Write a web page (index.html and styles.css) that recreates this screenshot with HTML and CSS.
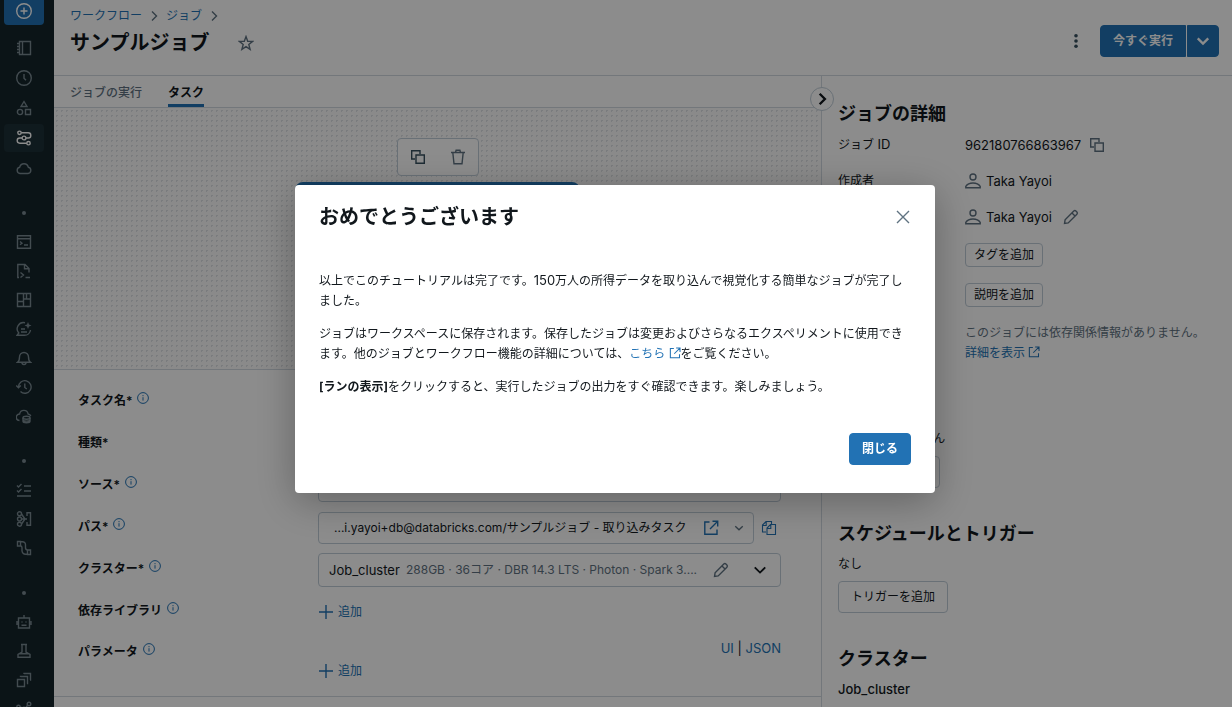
FILE: index.html
```html
<!DOCTYPE html>
<html lang="ja">
<head>
  <meta charset="UTF-8" />
  <meta name="viewport" content="width=device-width, initial-scale=1.0" />
  <title>サンプルジョブ</title>
  <link rel="stylesheet" href="styles.css">
</head>
<body>
  <!-- 共通アイコン -->
  <svg class="icon-defs" aria-hidden="true">
    <symbol id="i-info" viewBox="0 0 12 12"><circle cx="6" cy="6" r="5.4"/><path d="M6 5.2v3.4M6 3.1v1.1"/></symbol>
    <symbol id="i-user" viewBox="0 0 16 16"><circle cx="8" cy="4" r="3"/><path d="M.8 14.8v-1.5C2.3 11 5 10 8 10s5.700 1 7.200 3.300v1.500z"/></symbol>
    <symbol id="i-link" viewBox="0 0 16 16"><path d="M6.500 2H1.800v12.200H14V9.500M9.500 1.300h5.200v5.200M14.500 1.500L7 9"/></symbol>
    <symbol id="i-plus" viewBox="0 0 16 16"><path d="M8 1v14M1 8h14"/></symbol>
    <symbol id="i-pencil" viewBox="0 0 16 16"><path d="M1.500 14.500l.6-3.700 8.700-8.700a1.500 1.500 0 0 1 2.100 0l1 1a1.500 1.500 0 0 1 0 2.100L5.200 13.900zM9 4l3 3"/></symbol>
    <symbol id="i-copy" viewBox="0 0 16 16"><path d="M5 10H1.700V1.700H10V5M6 6h8.300v8.300H6z"/></symbol>
    <symbol id="i-down" viewBox="0 0 12 12"><path d="M1.500 3.800L6 8.200l4.500-4.400"/></symbol>
    <symbol id="i-right" viewBox="0 0 12 12"><path d="M4 1.500L8.500 6 4 10.500"/></symbol>
  </svg>

  <div class="app">
    <!-- サイドバー -->
    <nav class="sidebar" aria-label="メニュー">
      <button class="new-btn" aria-label="新規"><svg class="icon" viewBox="0 0 16 16"><circle cx="8" cy="8" r="7.300"/><path d="M8 4.500v7M4.500 8h7"/></svg></button>
      <div class="nav-group nav-main">
        <a href="#" class="nav-item" aria-label="ワークスペース"><svg class="icon" viewBox="0 0 16 16"><path d="M3.500 1.500h11v13h-11zM6.500 1.500v13M1 3.500h2.500M1 6.500h2.500M1 9.500h2.500M1 12.500h2.500"/></svg></a>
        <a href="#" class="nav-item" aria-label="最近"><svg class="icon" viewBox="0 0 16 16"><circle cx="8" cy="8" r="7.300"/><path d="M8 4v4.200l2 2"/></svg></a>
        <a href="#" class="nav-item" aria-label="カタログ"><svg class="icon" viewBox="0 0 16 16"><path d="M8 1.500l3 5H5zM9.500 9.500h5v5h-5z"/><circle cx="4" cy="12" r="2.600"/></svg></a>
        <a href="#" class="nav-item active" aria-label="ワークフロー"><svg class="icon" viewBox="0 0 16 16"><circle cx="3.500" cy="2.800" r="1.700"/><circle cx="8" cy="8" r="1.900"/><circle cx="12.500" cy="13.200" r="1.700"/><path d="M5.200 2.800h7A2.600 2.600 0 0 1 12.200 8H10M6 8H3.800a2.600 2.600 0 0 0 0 5.200h7"/></svg></a>
        <a href="#" class="nav-item" aria-label="クラスター"><svg class="icon" viewBox="0 0 16 16"><path d="M4 13.500a3.200 3.200 0 0 1-.3-6.300 4.400 4.400 0 0 1 8.600 0 3.200 3.200 0 0 1-.3 6.300z"/></svg></a>
      </div>
      <span class="nav-dot"></span>
      <div class="nav-group">
        <a href="#" class="nav-item" aria-label="SQLエディタ"><svg class="icon" viewBox="0 0 16 16"><path d="M1.500 1.800h13v12.500h-13zM1.500 4.700h13M4 7.500l2 1.700-2 1.600M8 11h4"/></svg></a>
        <a href="#" class="nav-item" aria-label="クエリ"><svg class="icon" viewBox="0 0 16 16"><path d="M3 14.500H1.800v-13H9l4 4v4M8.500 1.500v4.300H13M4.500 9.500l3 2.500-3 2.500M9.500 14.500H14"/></svg></a>
        <a href="#" class="nav-item" aria-label="ダッシュボード"><svg class="icon" viewBox="0 0 16 16"><path d="M1.500 1.500h13v13h-13zM7.500 1.500v13M1.500 9.500h6M7.500 7h7M10.500 1.500V7"/></svg></a>
        <a href="#" class="nav-item" aria-label="Genie"><svg class="icon" viewBox="0 0 16 16"><path d="M9 1.700A6.300 6.300 0 0 0 2.800 12L1 14.300h7.500a6 6 0 0 0 6-5.300M5 8h4M5 11h6"/><path class="solid" d="M12 1l1 2.500L15.500 4.500 13 5.500 12 8l-1-2.500L8.500 4.500 11 3.500z"/></svg></a>
        <a href="#" class="nav-item" aria-label="アラート"><svg class="icon" viewBox="0 0 16 16"><path d="M1.500 12.300c1.500-1 2-2.300 2-5.300a4.500 4.500 0 0 1 9 0c0 3 .5 4.300 2 5.300zM6 12.500a2 2 0 0 0 4 0"/></svg></a>
        <a href="#" class="nav-item" aria-label="クエリ履歴"><svg class="icon" viewBox="0 0 16 16"><path d="M2.500 8a6.300 6.300 0 1 1 2 4.600M.3 6.500l2.200 2.200 2.300-2.200M8.800 4.500v4l2 1.500"/></svg></a>
        <a href="#" class="nav-item" aria-label="SQLウェアハウス"><svg class="icon" viewBox="0 0 16 16"><path d="M3.500 12.500A3.100 3.100 0 0 1 3.600 6a4.300 4.300 0 0 1 8.500 0c1.500.3 2.400 1 2.700 2.200"/><ellipse cx="10.500" cy="9.800" rx="3.500" ry="1.500"/><path d="M7 9.800v3.500c0 2 7 2 7 0V9.800M7 11.700c0 1.900 7 1.900 7 0"/></svg></a>
      </div>
      <span class="nav-dot"></span>
      <div class="nav-group">
        <a href="#" class="nav-item" aria-label="ジョブの実行"><svg class="icon" viewBox="0 0 16 16"><path d="M1 3.500L2.500 5l3-3M1 8.500L2.500 10l3-3M8 4h7M8 9h7M1 14h14"/></svg></a>
        <a href="#" class="nav-item" aria-label="データ取り込み"><svg class="icon" viewBox="0 0 16 16"><circle cx="3.500" cy="2.800" r="2"/><circle cx="3.500" cy="8" r="2"/><circle cx="3.500" cy="13.200" r="2"/><path d="M5.500 3L9 8l-3.500 5M5.500 8H11M11 5V1.700h3.500v12.600H11V11"/></svg></a>
        <a href="#" class="nav-item" aria-label="Delta Live Tables"><svg class="icon" viewBox="0 0 16 16"><path d="M1.500 1.500h3v4.500h-3zM11.500 10h3v4.500h-3zM4.500 1.700h2a3 3 0 0 1 3 3v3a2.300 2.300 0 0 0 2 2.300M4.500 6c1 0 1.500.6 1.500 1.700v3.100a3.500 3.500 0 0 0 3.500 3.500h2"/></svg></a>
      </div>
      <span class="nav-dot"></span>
      <div class="nav-group">
        <a href="#" class="nav-item" aria-label="プレイグラウンド"><svg class="icon" viewBox="0 0 16 16"><path d="M2.500 4h11v10h-11zM8 1v3M1 7v4M15 7v4M5.500 8h1M9.500 8h1M5.500 11.300h5"/></svg></a>
        <a href="#" class="nav-item" aria-label="エクスペリメント"><svg class="icon" viewBox="0 0 16 16"><path d="M5 1.500h6M6 1.500V9L2 11.500v2.700h12v-2.700L10 9V1.500M3.500 10.800h9"/></svg></a>
        <a href="#" class="nav-item" aria-label="特徴量"><svg class="icon" viewBox="0 0 16 16"><path d="M1.500 7.500h7v7h-7zM4.500 5V4.500h7v7h-.6M8 2v-.5h6.500V8H14"/></svg></a>
        <a href="#" class="nav-item" aria-label="モデル"><svg class="icon" viewBox="0 0 16 16"><circle cx="2.500" cy="6" r="1.700"/><circle cx="13" cy="3" r="1.800"/><circle cx="8" cy="8" r="1.800"/><path d="M4.200 6l2.200 1M9.500 7l2-2.500M8 10v4"/></svg></a>
      </div>
    </nav>

    <div class="main">
      <!-- ヘッダー -->
      <header class="page-header">
        <div>
          <div class="breadcrumb">
            <a href="#">ワークフロー</a>
            <svg class="crumb-icon"><use href="#i-right"/></svg>
            <a href="#">ジョブ</a>
            <svg class="crumb-icon"><use href="#i-right"/></svg>
          </div>
          <div class="title-row">
            <h1>サンプルジョブ</h1>
            <button class="icon-btn" aria-label="お気に入り"><svg class="icon" viewBox="0 0 16 16"><path d="M8 1.600l1.700 4.600 4.900.2-3.800 3.100 1.300 4.800L8 11.600l-4.100 2.700 1.300-4.800-3.800-3.100 4.900-.2z"/></svg></button>
          </div>
        </div>
        <div class="header-actions">
          <button class="icon-btn dark" aria-label="その他"><svg class="icon" viewBox="0 0 16 16"><g class="solid"><circle cx="8" cy="2.700" r="1.800"/><circle cx="8" cy="8" r="1.800"/><circle cx="8" cy="13.300" r="1.800"/></g></svg></button>
          <div class="split-btn">
            <button class="btn-primary">今すぐ実行</button>
            <button class="btn-primary split-arrow" aria-label="実行オプション"><svg class="down-icon bold"><use href="#i-down"/></svg></button>
          </div>
        </div>
      </header>

      <div class="content">
        <section class="job-pane">
          <div class="tabs">
            <a href="#" class="tab">ジョブの実行</a>
            <a href="#" class="tab selected">タスク</a>
          </div>

          <!-- タスクグラフ -->
          <div class="canvas">
            <div class="node-tools">
              <button class="icon-btn dark" aria-label="複製"><svg class="icon"><use href="#i-copy"/></svg></button>
              <button class="icon-btn" aria-label="削除"><svg class="icon" viewBox="0 0 16 16"><path d="M1 3.500h14M5.500 3.500l.6-2.200h3.800l.6 2.200M2.800 3.500l1.200 11.200h8l1.200-11.200"/></svg></button>
            </div>
            <div class="task-node"></div>
          </div>

          <!-- タスク設定 -->
          <div class="task-form">
            <div class="form-row">
              <label class="form-label" for="taskName">タスク名* <svg class="info-icon"><use href="#i-info"/></svg></label>
              <input id="taskName" class="field" type="text">
            </div>
            <div class="form-row">
              <label class="form-label" for="taskType">種類*</label>
              <select id="taskType" class="field"><option></option></select>
            </div>
            <div class="form-row">
              <label class="form-label" for="taskSource">ソース* <svg class="info-icon"><use href="#i-info"/></svg></label>
              <select id="taskSource" class="field"><option></option></select>
            </div>
            <div class="form-row">
              <label class="form-label" for="taskPath">パス* <svg class="info-icon"><use href="#i-info"/></svg></label>
              <div class="field-line">
                <div class="field path-field">
                  <select id="taskPath" class="bare-select"><option>...i.yayoi+db@databricks.com/サンプルジョブ - 取り込みタスク</option></select>
                  <a href="#" class="icon-link" aria-label="ノートブックを開く"><svg class="icon"><use href="#i-link"/></svg></a>
                  <svg class="down-icon small"><use href="#i-down"/></svg>
                </div>
                <button class="icon-btn blue" aria-label="パスをコピー"><svg class="icon thin" viewBox="0 0 16 16"><path d="M5 12H1.500V5L5 1.500h5.500V4M1.500 5.500H5.200V1.500M6 14.500V8l3.500-3.500h5v10zM6 8.500h3.800v-4"/></svg></button>
              </div>
            </div>
            <div class="form-row">
              <label class="form-label" for="taskCluster">クラスター* <svg class="info-icon"><use href="#i-info"/></svg></label>
              <div class="field cluster-field">
                <select id="taskCluster" class="bare-select latin"><option>Job_cluster</option></select>
                <span class="cluster-spec">288GB · 36コア · DBR 14.3 LTS · Photon · Spark 3....</span>
                <button class="icon-btn" aria-label="クラスターを編集"><svg class="icon"><use href="#i-pencil"/></svg></button>
                <svg class="down-icon"><use href="#i-down"/></svg>
              </div>
            </div>
            <div class="form-row">
              <span class="form-label">依存ライブラリ <svg class="info-icon"><use href="#i-info"/></svg></span>
              <button class="add-btn"><svg class="icon"><use href="#i-plus"/></svg>追加</button>
            </div>
            <div class="form-row param-row">
              <span class="form-label">パラメータ <svg class="info-icon"><use href="#i-info"/></svg></span>
              <div class="param-value">
                <div class="mode-links latin"><a href="#">UI</a> | <a href="#">JSON</a></div>
                <button class="add-btn"><svg class="icon"><use href="#i-plus"/></svg>追加</button>
              </div>
            </div>
          </div>
        </section>

        <!-- ジョブの詳細 -->
        <aside class="details">
          <button class="collapse-btn" aria-label="詳細を閉じる"><svg class="down-icon bold"><use href="#i-right"/></svg></button>
          <section class="detail-section">
            <h2>ジョブの詳細</h2>
            <dl class="detail-list">
              <dt>ジョブ <span class="latin">ID</span></dt>
              <dd><span class="latin">962180766863967</span><button class="icon-btn" aria-label="IDをコピー"><svg class="icon"><use href="#i-copy"/></svg></button></dd>
              <dt>作成者</dt>
              <dd class="person"><svg class="icon"><use href="#i-user"/></svg><span class="latin">Taka Yayoi</span></dd>
              <dt>実行者</dt>
              <dd class="person"><svg class="icon"><use href="#i-user"/></svg><span class="latin">Taka Yayoi</span><button class="icon-btn edit-btn" aria-label="実行者を編集"><svg class="icon"><use href="#i-pencil"/></svg></button></dd>
              <dt>タグ</dt>
              <dd><button class="btn btn-small">タグを追加</button></dd>
              <dt>説明</dt>
              <dd><button class="btn btn-small">説明を追加</button></dd>
              <dt>リネージ</dt>
              <dd class="lineage">このジョブには依存関係情報がありません。<a href="#">詳細を表示 <svg class="ext-icon"><use href="#i-link"/></svg></a></dd>
            </dl>
          </section>
          <section class="detail-section">
            <h2>Git</h2>
            <p>設定されていません</p>
            <button class="btn">Git設定を追加</button>
          </section>
          <section class="detail-section">
            <h2>スケジュールとトリガー</h2>
            <p>なし</p>
            <button class="btn">トリガーを追加</button>
          </section>
          <section class="detail-section">
            <h2>クラスター</h2>
            <p class="cluster-name latin">Job_cluster</p>
          </section>
        </aside>
      </div>
    </div>
  </div>

  <!-- 完了モーダル -->
  <div class="overlay">
    <div class="modal" role="dialog" aria-modal="true" aria-labelledby="modalTitle">
      <div class="modal-header">
        <h2 id="modalTitle">おめでとうございます</h2>
        <button class="icon-btn" aria-label="閉じる"><svg class="icon" viewBox="0 0 16 16"><path d="M2 2l12 12M14 2L2 14"/></svg></button>
      </div>
      <div class="modal-body">
        <p>以上でこのチュートリアルは完了です。<span class="latin">150</span>万人の所得データを取り込んで視覚化する簡単なジョブが完了しました。</p>
        <p>ジョブはワークスペースに保存されます。保存したジョブは変更およびさらなるエクスペリメントに使用できます。他のジョブとワークフロー機能の詳細については、<a href="#">こちら <svg class="ext-icon"><use href="#i-link"/></svg></a>をご覧ください。</p>
        <p><strong>[ランの表示]</strong>をクリックすると、実行したジョブの出力をすぐ確認できます。楽しみましょう。</p>
      </div>
      <div class="modal-footer">
        <button class="btn-primary">閉じる</button>
      </div>
    </div>
  </div>
</body>
</html>
```
FILE: styles.css
```css
/* ===== 基本 ===== */
* {
  box-sizing: border-box;
}
body {
  margin: 0;
  font-family: Inter, "Noto Sans CJK JP", sans-serif;
  font-size: 12px;
  line-height: 20px;
  color: #11171c;
  background-color: #fff;
}
h1, h2, p, dl, dd {
  margin: 0;
}
h1, h2 {
  font-weight: 600;
}
h1 {
  font-size: 20px;
  line-height: 28px;
}
h2 {
  font-size: 18px;
  line-height: 24px;
}
a {
  color: #2272b4;
  text-decoration: none;
}
button, input, select {
  font: inherit;
  color: inherit;
}
button {
  cursor: pointer;
}
/* 英数字は和文より一回り大きくする */
.latin {
  font-size: 13px;
}

/* ===== アイコン ===== */
.icon-defs {
  display: none;
}
svg {
  fill: none;
  stroke: currentColor;
  stroke-width: 1.4;
  flex: none;
}
.solid {
  fill: currentColor;
  stroke: none;
}
.icon {
  width: 16px;
  height: 16px;
}
.icon.thin {
  stroke-width: 1.1;
}
.info-icon {
  width: 12px;
  height: 12px;
  margin-bottom: 6px;
  color: #2272b4;
  stroke-width: 1;
}
.crumb-icon, .ext-icon {
  width: 12px;
  height: 12px;
}
.down-icon {
  width: 14px;
  height: 14px;
  stroke-width: 1.6;
}
.down-icon.bold {
  stroke-width: 2;
}
.down-icon.small {
  width: 10px;
  height: 10px;
  color: #5f7281;
}
.icon-btn {
  display: flex;
  padding: 0;
  border: 0;
  background: none;
  color: #5f7281;
}
.icon-btn.dark {
  color: #37505f;
}
.icon-btn.blue, .icon-link {
  display: flex;
  color: #2272b4;
}

/* ===== ボタン ===== */
.btn, .btn-primary {
  height: 32px;
  padding: 0 12px;
  border: 1px solid #c0cdd8;
  border-radius: 4px;
  background: none;
}
.btn-small {
  height: 24px;
  padding: 0 8px;
}
.btn-primary {
  border-color: #2272b4;
  background-color: #2272b4;
  color: #fff;
  font-weight: 600;
}

/* ===== レイアウト ===== */
.app {
  display: flex;
  height: 100vh;
  overflow: hidden;
}
.main {
  flex: 1;
  display: flex;
  flex-direction: column;
  min-width: 0;
}
.content {
  flex: 1;
  display: flex;
  min-height: 0;
}

/* ===== サイドバー ===== */
.sidebar {
  width: 54px;
  padding: 0 10px 0 4px;
  background-color: #14252b;
  color: #7a8a92;
}
.new-btn {
  display: flex;
  justify-content: center;
  width: 100%;
  height: 25px;
  padding: 3px 0 0;
  border: 0;
  border-radius: 0 0 4px 4px;
  background-color: #2272b4;
  color: #fff;
}
.nav-item {
  display: flex;
  align-items: center;
  justify-content: center;
  height: 29px;
  border-radius: 4px;
  color: inherit;
}
.nav-main {
  display: grid;
  gap: 2px;
  margin-top: 9px;
}
.nav-main .nav-item {
  height: 28px;
}
.nav-item.active {
  background-color: #1d3038;
  color: #fff;
}
.nav-dot {
  display: block;
  width: 4px;
  height: 4px;
  margin: 29px auto 12px;
  border-radius: 50%;
  background-color: #7a8a92;
}

/* ===== ヘッダー ===== */
.page-header {
  display: flex;
  justify-content: space-between;
  height: 76px;
  padding: 6px 13px 0 16px;
  border-bottom: 1px solid #d1d9e1;
}
.breadcrumb, .title-row, .header-actions {
  display: flex;
  align-items: center;
}
.breadcrumb {
  gap: 6px;
  color: #5f7281;
}
.title-row {
  gap: 29px;
  padding-top: 3px;
}
.header-actions {
  gap: 16px;
}
.split-btn {
  display: flex;
  gap: 1px;
}
.split-btn .btn-primary:first-child {
  border-radius: 4px 0 0 4px;
}
.split-btn .split-arrow {
  display: flex;
  align-items: center;
  padding: 0 8px;
  border-radius: 0 4px 4px 0;
}

/* ===== タブ ===== */
.job-pane {
  flex: 1;
  min-width: 0;
}
.tabs {
  display: flex;
  gap: 26px;
  height: 32px;
  padding: 0 16px;
  border-bottom: 1px solid #d1d9e1;
}
.tab {
  padding-top: 7px;
  color: #5f7281;
  font-weight: 500;
}
.tab.selected {
  border-bottom: 3px solid #2272b4;
  color: #11171c;
  font-weight: 600;
}

/* ===== タスクグラフ ===== */
.canvas {
  display: flex;
  flex-direction: column;
  align-items: center;
  gap: 6px;
  height: 262px;
  padding-top: 30px;
  border-bottom: 1px solid #d1d9e1;
  background-color: #fbfbfb;
  background-image: radial-gradient(circle, #dfe2e5 1px, transparent 1px);
  background-size: 5px 5px;
}
.node-tools {
  display: flex;
  align-items: center;
  gap: 24px;
  height: 38px;
  padding: 0 12px;
  border: 1px solid #c0cdd8;
  border-radius: 4px;
  background-color: #fff;
}
.task-node {
  width: 285px;
  height: 108px;
  border: 3px solid #2272b4;
  border-radius: 8px;
  background-color: #fff;
}

/* ===== タスク設定 ===== */
.task-form {
  padding: 11px 40px 0 24px;
  border-bottom: 1px solid #d1d9e1;
}
.form-row {
  display: grid;
  grid-template-columns: 240px minmax(0, 1fr);
  align-items: center;
  min-height: 42px;
}
.form-label {
  display: flex;
  align-items: center;
  gap: 5px;
  padding-bottom: 2px;
  font-weight: 600;
}
.field {
  width: 100%;
  height: 32px;
  border: 1px solid #c0cdd8;
  border-radius: 4px;
  background-color: #fff;
}
.field-line {
  display: flex;
  align-items: center;
  gap: 7px;
  padding-right: 4px;
}
.path-field, .cluster-field {
  display: flex;
  align-items: center;
}
.path-field {
  padding: 0 9px 0 15px;
}
.path-field .icon-link {
  margin: 0 15px 0 auto;
}
.cluster-field {
  height: 34px;
  padding: 0 13px 0 10px;
}
.cluster-field .icon-btn {
  margin: 0 24px 0 auto;
}
.bare-select {
  flex: none;
  padding: 0;
  border: 0;
  background: none;
  appearance: none;
}
.cluster-field {
  padding-right: 13px;
}
.cluster-spec {
  padding-left: 6px;
  color: #5f7281;
  white-space: nowrap;
}
.add-btn {
  display: flex;
  align-items: center;
  justify-self: start;
  gap: 4px;
  padding: 0;
  border: 0;
  background: none;
  color: #2272b4;
}
.param-row {
  align-items: start;
  min-height: 63px;
}
.param-row .form-label {
  padding-top: 9px;
}
.param-value {
  display: grid;
  gap: 3px;
  padding-top: 5px;
}
.mode-links {
  text-align: right;
}

/* ===== ジョブの詳細 ===== */
.details {
  position: relative;
  width: 411px;
  padding: 26px 16px 0;
  border-left: 1px solid #d1d9e1;
}
.collapse-btn {
  position: absolute;
  top: 11px;
  left: -12px;
  display: flex;
  align-items: center;
  justify-content: center;
  width: 24px;
  height: 24px;
  padding: 0;
  border: 1px solid #c0cdd8;
  border-radius: 50%;
  background-color: #fff;
}
.detail-section {
  margin-bottom: 34px;
}
.detail-section p {
  margin: 8px 0 7px;
}
.detail-list {
  display: grid;
  grid-template-columns: 127px minmax(0, 1fr);
  row-gap: 16px;
  padding-top: 8px;
}
.detail-list dd {
  display: flex;
  align-items: center;
  gap: 8px;
}
.detail-list .person {
  gap: 5px;
}
.person .icon {
  color: #5f7281;
}
.edit-btn {
  margin-left: 6px;
}
.detail-list .lineage {
  display: block;
  color: #5f7281;
}
.lineage a {
  display: block;
}
.lineage .ext-icon, .modal-body .ext-icon {
  vertical-align: -1px;
}
.detail-section .cluster-name {
  font-weight: 500;
}

/* ===== モーダル ===== */
.overlay {
  position: fixed;
  inset: 0;
  display: flex;
  align-items: flex-start;
  justify-content: center;
  padding: 185px 18px 0 16px;
  background-color: rgba(0, 0, 0, 0.45);
}
.modal {
  width: 640px;
  max-width: 100%;
  padding: 18px 24px 28px;
  border-radius: 4px;
  background-color: #fff;
  box-shadow: 0 8px 40px rgba(0, 0, 0, 0.3);
}
.modal-header {
  display: flex;
  align-items: center;
  justify-content: space-between;
}
.modal-header h2 {
  font-size: 20px;
  line-height: 28px;
}
.modal-body {
  padding: 39px 0 36px;
}
.modal-body p + p {
  margin-top: 13px;
}
.modal-footer {
  display: flex;
  justify-content: flex-end;
}
```
